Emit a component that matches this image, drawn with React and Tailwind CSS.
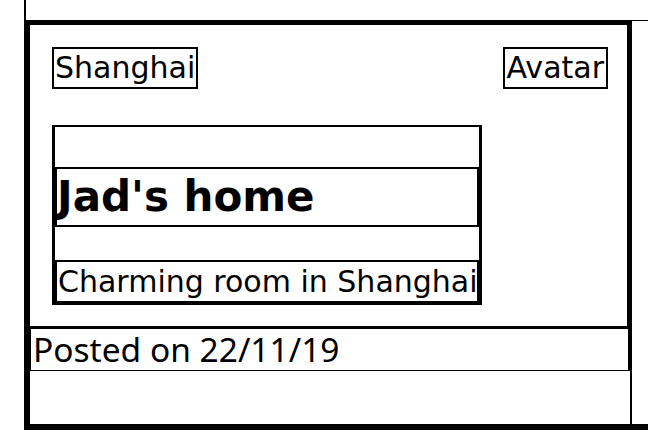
export default function App() {
  return (
    <div className="w-[648px] h-[440px] bg-white overflow-hidden text-black font-['DejaVu_Sans',sans-serif]">
      <div className="ml-[24px] h-[20px] border-l-2 border-black" />
      <div className="ml-[24px] border-t border-b-[6px] border-black">
        <div className="w-[608px] h-[404px] -mt-px border-t-[5px] border-l-[6px] border-r-2 border-black flex flex-col">
          <div className="border-r-[3px] border-b-[3px] border-black pl-[22px] pr-[19px] pt-[22px] pb-[21px]">
            <div className="flex justify-between items-start">
              <div className="h-[42px] border-2 border-black px-[1px] text-[30px] leading-[38px]">Shanghai</div>
              <div className="h-[42px] border-2 border-black px-[2px] text-[30px] leading-[38px]">Avatar</div>
            </div>
            <div className="mt-[36px] w-[430px] h-[180px] border-2 border-l-[3px] border-b-[2px] border-r-[3px] border-black flex flex-col">
              <div className="h-[40px]" />
              <div className="h-[60px] border-2 border-black text-[42px] font-bold leading-[56px] whitespace-nowrap">Jad's home</div>
              <div className="h-[33px]" />
              <div className="h-[43px] border-2 border-black pl-[1px] text-[30px] leading-[39px] whitespace-nowrap">Charming room in Shanghai</div>
            </div>
          </div>
          <div className="h-[42px] border-l border-r-2 border-b border-black pl-[2px] text-[33.5px] leading-[40px] font-['Noto_Sans',sans-serif] whitespace-nowrap">Posted on 22/11/19</div>
        </div>
      </div>
    </div>
  );
}
